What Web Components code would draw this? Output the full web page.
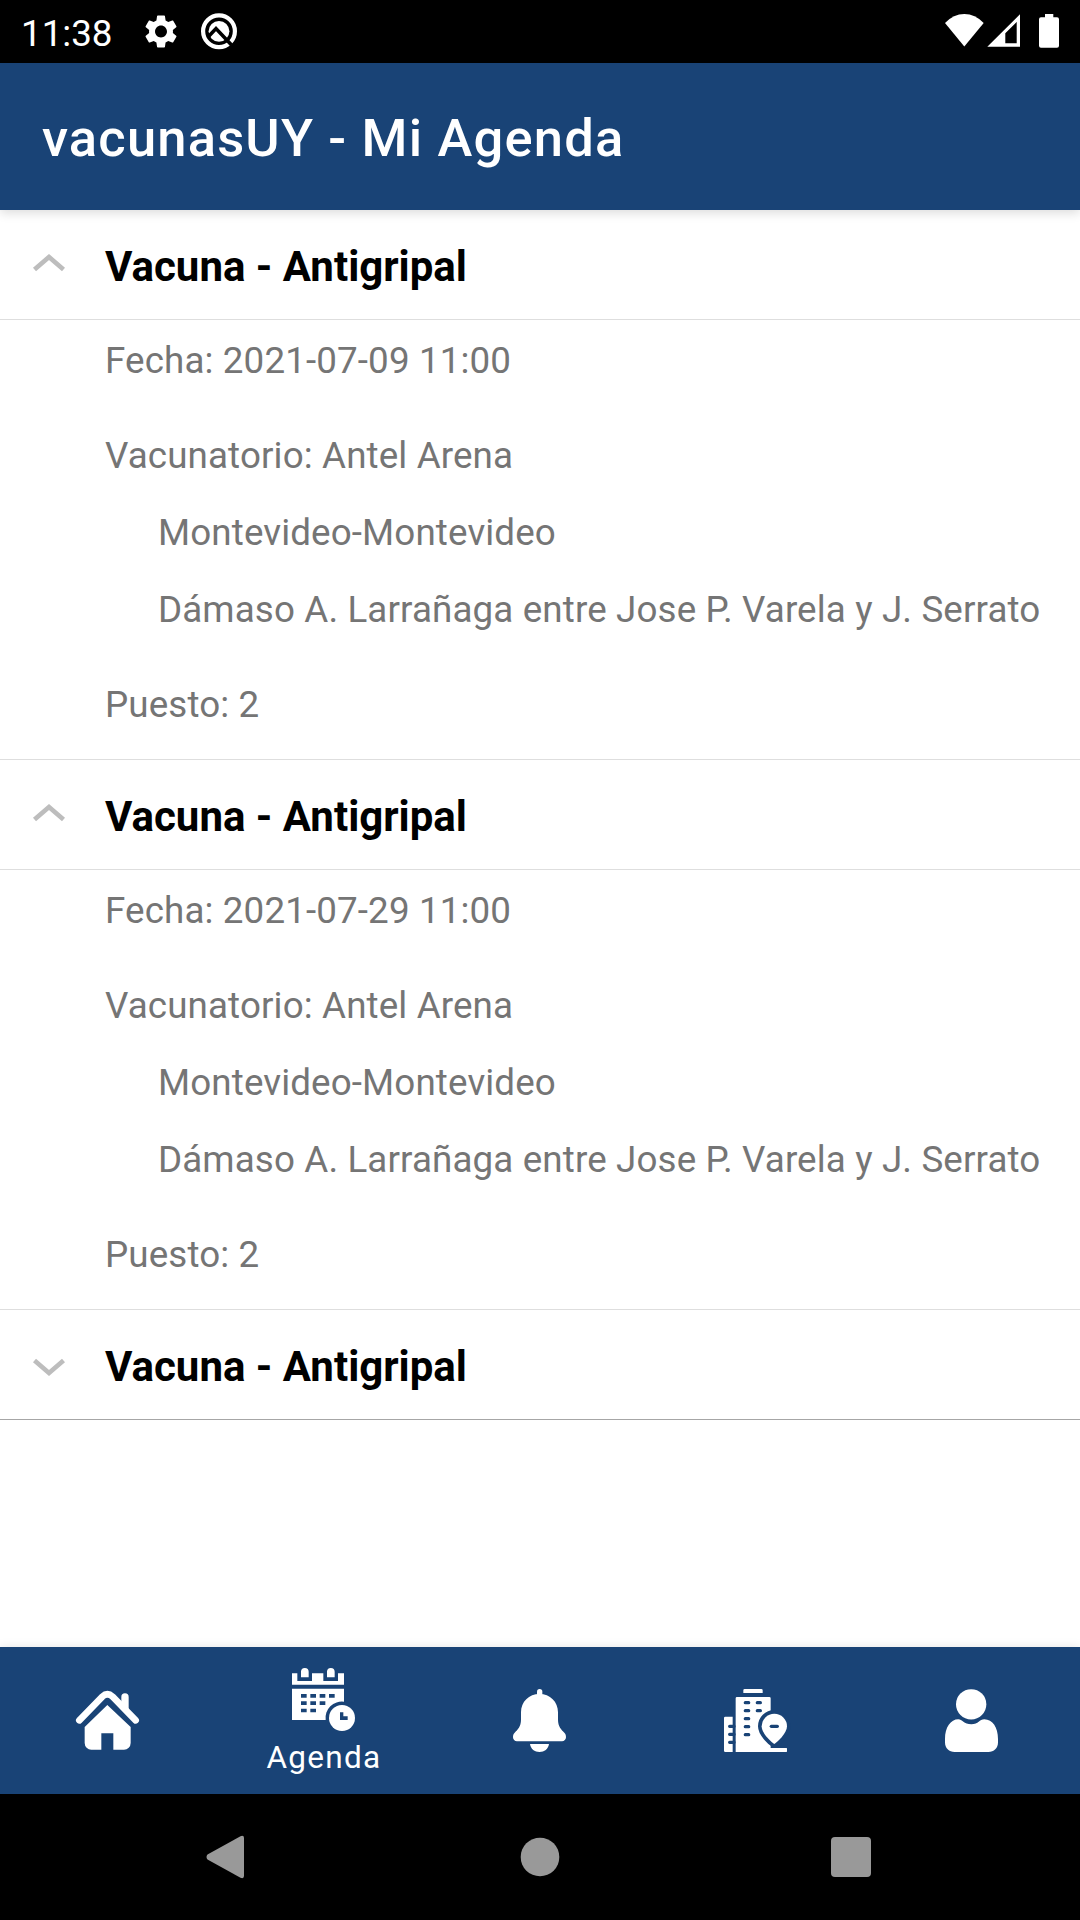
<!DOCTYPE html>
<html lang="es">
<head>
<meta charset="utf-8">
<title>vacunasUY - Mi Agenda</title>
<style>
html,body{margin:0;height:100%;background:#fff}
body{font-family:Roboto,sans-serif}
</style>
</head>
<body>
<agenda-app></agenda-app>
<script>
class Base extends HTMLElement{
  connectedCallback(){
    if(this.shadowRoot)return;
    this.attachShadow({mode:'open'}).innerHTML=`<style>*{box-sizing:border-box}svg{display:block;flex:none}</style>`+this.view();
  }
}

customElements.define('status-bar',class extends Base{view(){return `
<style>
:host{display:flex;align-items:flex-start;justify-content:space-between;height:63px;background:#000;color:#fff}
.side{display:flex;height:63px}
.time{font-size:36.75px;line-height:43px;padding:12px 0 0 21px;width:141px;white-space:nowrap}
</style>
<div class="side"><span class="time">11:38</span>
<svg width="110" height="63" viewBox="141 0 110 63">
<g transform="translate(161 31.5) scale(1.66) translate(-12 -12)"><path fill="#fff" d="M19.14 12.94c.04-.3.06-.61.06-.94 0-.32-.02-.64-.07-.94l2.03-1.58c.18-.14.23-.41.12-.61l-1.92-3.32c-.12-.22-.37-.29-.59-.22l-2.39.96c-.5-.38-1.03-.7-1.62-.94l-.36-2.54c-.04-.24-.24-.41-.48-.41h-3.84c-.24 0-.43.17-.47.41l-.36 2.54c-.59.24-1.13.57-1.62.94l-2.39-.96c-.22-.08-.47 0-.59.22L2.74 8.87c-.12.21-.08.47.12.61l2.03 1.58c-.05.3-.09.63-.09.94s.02.64.07.94l-2.03 1.58c-.18.14-.23.41-.12.61l1.92 3.32c.12.22.37.29.59.22l2.39-.96c.5.38 1.03.7 1.62.94l.36 2.54c.05.24.24.41.48.41h3.84c.24 0 .44-.17.47-.41l.36-2.54c.59-.24 1.13-.56 1.62-.94l2.39.96c.22.08.47 0 .59-.22l1.92-3.32c.12-.22.07-.47-.12-.61l-2.01-1.58zM12 15.6c-1.98 0-3.6-1.62-3.6-3.6s1.62-3.6 3.6-3.6 3.6 1.62 3.6 3.6-1.62 3.6-3.6 3.6z"/></g>
<circle cx="219" cy="31.3" r="15.900" fill="none" stroke="#fff" stroke-width="4.200"/>
<circle cx="219" cy="31.300" r="10.400" fill="#fff"/>
<path d="M208.500 36.500L216 28.600L231.500 45" fill="none" stroke="#000" stroke-width="3.600"/>
</svg></div>
<svg width="140" height="63" viewBox="940 0 140 63" fill="#fff">
<path d="M964.3 46.6L945 23Q953.5 14 964.3 14T983.7 23Z"/>
<path fill-rule="evenodd" d="M987.3 46.8L1020 14.2V46.8ZM1005.3 33.3V43.3H1016.7V22Z"/>
<path d="M1045 14h8.3v3.3h3.7a2 2 0 0 1 2 2v26.4a2 2 0 0 1-2 2h-16a2 2 0 0 1-2-2v-26.400a2 2 0 0 1 2-2h4z"/>
</svg>`}});

customElements.define('app-bar',class extends Base{view(){return `
<style>
:host{display:flex;align-items:center;box-sizing:border-box;height:147px;padding:3px 42px 0;background:#194376;color:#fff;font-size:52.5px;font-weight:500;line-height:62px;letter-spacing:1.18px;box-shadow:0 3px 10px rgba(0,0,0,.14);z-index:1;white-space:nowrap}
</style><slot></slot>`}});

customElements.define('vaccine-group',class extends Base{view(){const open=this.hasAttribute('open');return `
<style>
:host{display:block}
.head{display:flex;align-items:center;height:110px;border-bottom:1px solid #dedede;color:#000;font-size:42px;font-weight:700;line-height:50px;white-space:nowrap}
:host(:not([open])) .head{border-color:#a6a6a6}
.head svg{margin:0 36px 0 29px}
.head span{padding-top:5px}
.body{height:440px;border-bottom:1px solid #dedede;padding:19px 0 0 105px}
</style>
<div class="head"><svg width="40" height="32" viewBox="0 0 40 32"><path d="${open?'M5.500 20.500L20 8L34.500 20.500':'M5.500 11.500L20 24L34.500 11.500'}" fill="none" stroke="#bdbdbd" stroke-width="4.600"/></svg><span>${this.getAttribute('name')}</span></div>
${open?'<div class="body"><slot></slot></div>':''}`}});

customElements.define('detail-line',class extends Base{view(){return `
<style>
:host{display:block;font-size:36.75px;line-height:43px;color:#757575;letter-spacing:.13px;white-space:nowrap;margin-bottom:52px}
:host([tight]){margin-bottom:34px}
:host([indent]){padding-left:53px}
</style><slot></slot>`}});

const ICONS={
home:`<path d="M10 94L79 23Q94 9 110 23L179 94" fill="none" stroke="#fff" stroke-width="20" stroke-linecap="round"/><path d="M136 60V24a11 11 0 0 1 22 0V70ZM94 48L164 114V162a20 20 0 0 1-20 20H112V133H76V182H46a20 20 0 0 1-20-20V114Z"/>`,
agenda:`<path d="M0 16H16V39H60V16H94V39H138V16H156V50H0ZM27 28V11.500a11.500 11.500 0 0 1 23 0V28ZM105 28V11.500a11.500 11.500 0 0 1 23 0V28Z"/><path fill-rule="evenodd" d="M0 62H156V101A49 49 0 0 0 101 156H0ZM27 78v11h17v-11zM55 78v11h17v-11zM83 78v11h17v-11zM111 78v11h17v-11zM27 100v11h17v-11zM55 100v11h17v-11zM83 100v11h17v-11zM27 122v11h17v-11zM55 122v11h17v-11z"/><circle cx="150" cy="150" r="39"/><path fill="#194376" d="M144 133h10v12h13v11h-23z"/>`,
bell:`<path d="M87 20V8a8 8 0 0 1 16 0V20Z"/><path d="M94.500 15C126 15 150 38 150 70V92C150 112 160 122 169 131C173 135 174 139 174 145C174 152 169 157 162 157H27C20 157 15 152 15 145C15 139 16 135 20 131C29 122 39 112 39 92V70C39 38 63 15 94.500 15ZM66 165H123C121 180 109 189 94.500 189S68 180 66 165Z"/>`,
places:`<path d="M62 0H112q4 0 4 4V12H58V4q0-4 4-4ZM4 83H26V189H4q-4 0-4-4V87q0-4 4-4ZM39 24H136q4 0 4 4V177H185q4 0 4 4V185q0 4-4 4H35V28q0-4 4-4Z"/><g stroke="#194376" stroke-width="10" stroke-linecap="round"><path d="M64 41H74M64 65H74M64 89H74M64 113H74M64 137H74M100 41H109M100 65H109M17 112H30M17 136H30M17 160H30"/></g><path d="M151 165C143 160 113 134 113 112a38 38 0 0 1 76 0C189 134 159 160 151 165Z" stroke="#194376" stroke-width="22"/><path d="M138 177H185q4 0 4 4V185q0 4-4 4H138Z"/><path d="M151 165C143 160 113 134 113 112a38 38 0 0 1 76 0C189 134 159 160 151 165Z"/><path d="M142 112H160" stroke="#194376" stroke-width="10" stroke-linecap="round"/>`,
person:`<circle cx="93.500" cy="46" r="45.500"/><path d="M55 91C66 91 72 106 94 106S118 91 133 91C158 91 174 116 174 150V160C174 178 162 189 145 189H44C27 189 15 178 15 160V150C15 115 32 91 55 91Z"/>`
};
customElements.define('nav-tab',class extends Base{view(){return `
<style>
:host{flex:1;display:flex;box-sizing:border-box;flex-direction:column;align-items:center;justify-content:center;height:147px;color:#fff;font-size:31.5px;line-height:38px;letter-spacing:1.3px}
:host([active]){justify-content:flex-start;padding-top:21px}
svg{overflow:visible;margin-right:1px}
::slotted(span){margin-top:8px}
</style>
<svg width="63" height="63" viewBox="0 0 189 189" fill="#fff">${ICONS[this.getAttribute('icon')]}</svg><slot></slot>`}});

customElements.define('system-nav',class extends Base{view(){return `
<style>:host{display:flex;box-sizing:border-box;justify-content:space-between;align-items:center;height:126px;padding:0 209px 0 206px;background:#000}</style>
<svg width="39" height="44" viewBox="0 0 39 44" fill="#999"><path d="M1.500 19.500L34.500 1.200Q38 0 38 3V41Q38 44 34.500 42.800L1.500 24.500Q-.500 22 1.500 19.500Z"/></svg>
<svg width="40" height="40" viewBox="0 0 40 40" fill="#999" overflow="visible"><circle cx="22" cy="20" r="19.300"/></svg>
<svg width="40" height="40" viewBox="0 0 40 40" fill="#999"><rect width="40" height="40" rx="4"/></svg>`}});

customElements.define('agenda-app',class extends Base{view(){
const detail=date=>`<vaccine-group open name="Vacuna - Antigripal"><detail-line>Fecha: ${date}</detail-line><detail-line tight>Vacunatorio: Antel Arena</detail-line><detail-line tight indent>Montevideo-Montevideo</detail-line><detail-line indent>Dámaso A. Larrañaga entre Jose P. Varela y J. Serrato</detail-line><detail-line>Puesto: 2</detail-line></vaccine-group>`;
return `
<style>
:host{display:flex;flex-direction:column;width:1080px;height:1920px;overflow:hidden;background:#fff}
main{flex:1;min-height:0}
nav{display:flex;height:147px;background:#194376;box-shadow:0 0 10px rgba(0,0,0,.1)}
</style>
<status-bar></status-bar>
<app-bar>vacunasUY - Mi Agenda</app-bar>
<main>${detail('2021-07-09 11:00')}${detail('2021-07-29 11:00')}<vaccine-group name="Vacuna - Antigripal"></vaccine-group></main>
<nav><nav-tab icon="home"></nav-tab><nav-tab icon="agenda" active><span>Agenda</span></nav-tab><nav-tab icon="bell"></nav-tab><nav-tab icon="places"></nav-tab><nav-tab icon="person"></nav-tab></nav>
<system-nav></system-nav>`}});
</script>
</body>
</html>
